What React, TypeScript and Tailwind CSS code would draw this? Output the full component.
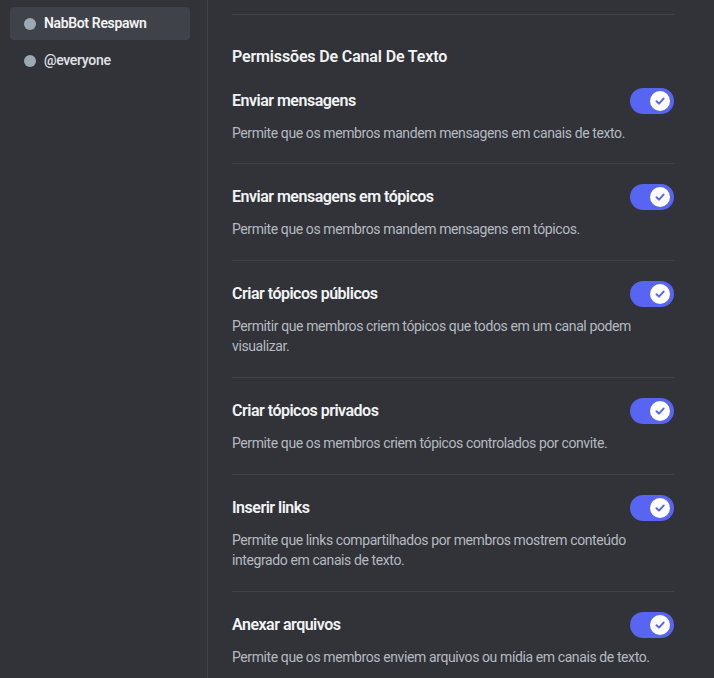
const perms = [
  {
    title: "Enviar mensagens",
    desc: "Permite que os membros mandem mensagens em canais de texto.",
  },
  {
    title: "Enviar mensagens em tópicos",
    desc: "Permite que os membros mandem mensagens em tópicos.",
  },
  {
    title: "Criar tópicos públicos",
    desc: "Permitir que membros criem tópicos que todos em um canal podem visualizar.",
  },
  {
    title: "Criar tópicos privados",
    desc: "Permite que os membros criem tópicos controlados por convite.",
  },
  {
    title: "Inserir links",
    desc: "Permite que links compartilhados por membros mostrem conteúdo integrado em canais de texto.",
  },
  {
    title: "Anexar arquivos",
    desc: "Permite que os membros enviem arquivos ou mídia em canais de texto.",
  },
];

function Toggle() {
  return (
    <div className="flex h-[26px] w-[44px] shrink-0 items-center justify-end rounded-full bg-[#5865f2] pr-[4px]">
      <div className="flex h-[20px] w-[20px] items-center justify-center rounded-full bg-white">
        <svg width="12" height="12" viewBox="0 0 12 12" fill="none">
          <path
            d="M2.5 6.2 L5 8.6 L9.6 3.6"
            stroke="#5865f2"
            strokeWidth="2"
            strokeLinecap="round"
            strokeLinejoin="round"
          />
        </svg>
      </div>
    </div>
  );
}

function RoleItem({ name, active }: { name: string; active?: boolean }) {
  return (
    <div
      className={
        "flex h-[33px] items-center gap-[8px] rounded-[4px] pl-[14px] " +
        (active ? "bg-[#404249] text-[#f2f3f5]" : "text-[#dbdee1]")
      }
    >
      <span className="h-[12px] w-[12px] rounded-full bg-[#99aab5]" />
      <span className="text-[14px] font-semibold tracking-[-0.35px]">{name}</span>
    </div>
  );
}

export default function App() {
  return (
    <div
      className="flex h-[678px] w-[714px] overflow-hidden bg-[#313338]"
      style={{ fontFamily: 'Roboto, "Noto Sans", sans-serif' }}
    >
      <aside className="flex w-[208px] shrink-0 flex-col gap-[4px] border-r border-[#3f4147] pl-[10px] pr-[17px] pt-[7px]">
        <RoleItem name="NabBot Respawn" active />
        <RoleItem name="@everyone" />
      </aside>

      <main className="flex-1 pl-[24px] pr-[40px] pt-[14px]">
        <div className="border-t border-[#3f4147]" />
        <h2 className="mt-[32px] text-[16px] font-semibold leading-[20px] tracking-[-0.15px] text-[#f2f3f5]">
          Permissões De Canal De Texto
        </h2>
        <div className="mt-[1px] flex flex-col">
          {perms.map((p, i) => (
            <div
              key={p.title}
              className={i > 0 ? "border-t border-[#3f4147] pb-[21px] pt-[20px]" : "pb-[20px] pt-[20px]"}
            >
              <div className="flex h-[26px] items-center justify-between">
                <span className="text-[16px] font-semibold tracking-[-0.5px] text-[#f2f3f5]">{p.title}</span>
                <Toggle />
              </div>
              <p className="mt-[9px] text-[14px] leading-[20px] tracking-[-0.4px] text-[#b5bac1]">{p.desc}</p>
            </div>
          ))}
        </div>
      </main>
    </div>
  );
}
